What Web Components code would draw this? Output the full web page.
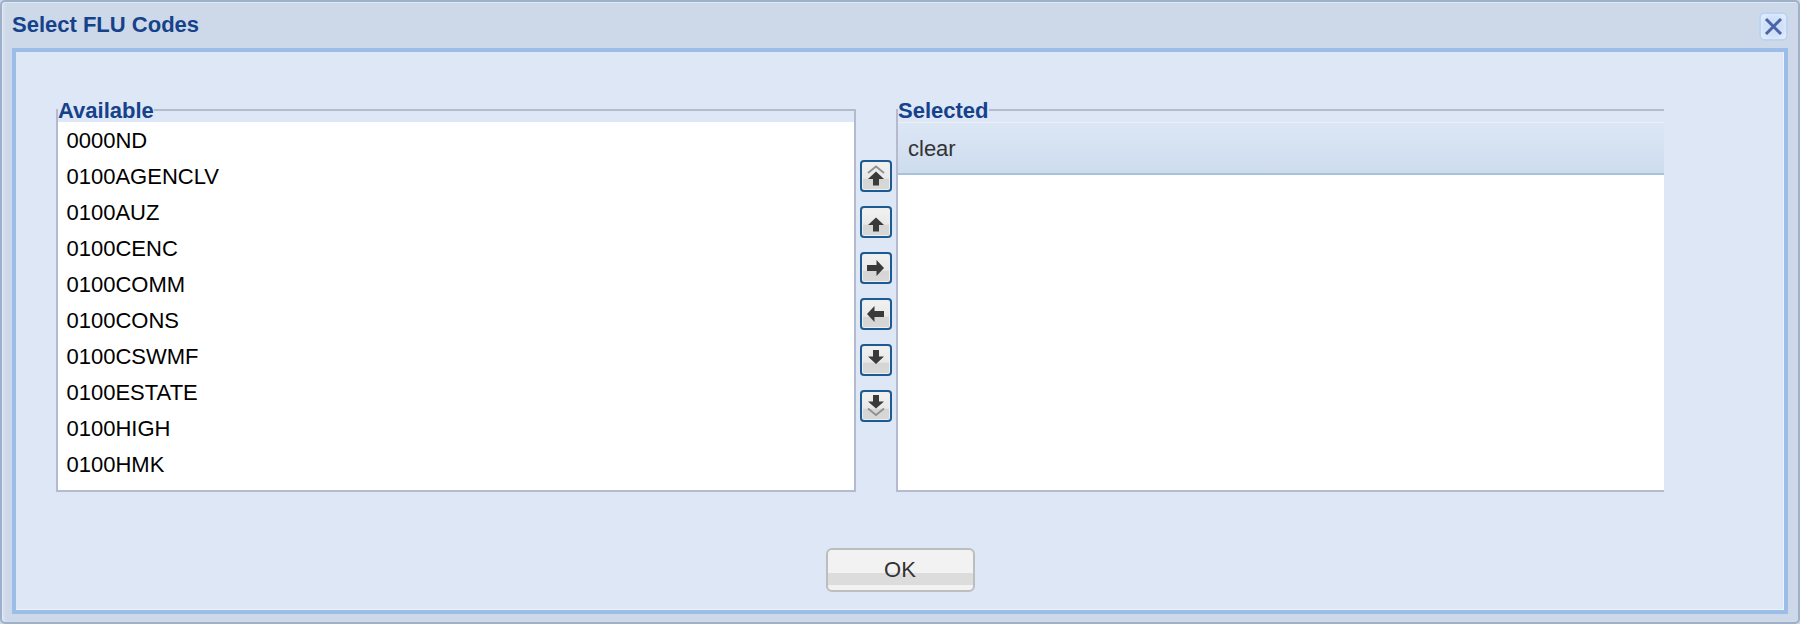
<!DOCTYPE html>
<html>
<head>
<meta charset="utf-8">
<title>Select FLU Codes</title>
<style>
  html, body { margin: 0; padding: 0; background: #cdd9e8; }
  body { font-family: "Liberation Sans", Arial, sans-serif; font-size: 22px; }
</style>
</head>
<body>

<flu-dialog heading="Select FLU Codes">
  <flu-picklist legend="Available" style="--list-width: 800px">
    <flu-item>0000ND</flu-item>
    <flu-item>0100AGENCLV</flu-item>
    <flu-item>0100AUZ</flu-item>
    <flu-item>0100CENC</flu-item>
    <flu-item>0100COMM</flu-item>
    <flu-item>0100CONS</flu-item>
    <flu-item>0100CSWMF</flu-item>
    <flu-item>0100ESTATE</flu-item>
    <flu-item>0100HIGH</flu-item>
    <flu-item>0100HMK</flu-item>
  </flu-picklist>
  <flu-move-bar>
    <flu-move-button icon="top"></flu-move-button>
    <flu-move-button icon="up"></flu-move-button>
    <flu-move-button icon="right"></flu-move-button>
    <flu-move-button icon="left"></flu-move-button>
    <flu-move-button icon="down"></flu-move-button>
    <flu-move-button icon="bottom"></flu-move-button>
  </flu-move-bar>
  <flu-picklist legend="Selected" open-right style="--list-width: 768px">
    <flu-clear-row slot="header">clear</flu-clear-row>
  </flu-picklist>
  <flu-ok-button slot="footer">OK</flu-ok-button>
</flu-dialog>

<script>
class FluDialog extends HTMLElement {
  constructor() {
    super();
    this.attachShadow({ mode: 'open' });
    this.shadowRoot.innerHTML = `
      <style>
        :host {
          display: flex;
          flex-direction: column;
          box-sizing: border-box;
          width: 1800px;
          height: 624px;
          background: #cdd9e8;
          border: 2px solid #9fb1ca;
          border-radius: 5px;
          box-shadow: inset 1px 1px 0 #dfe7f2, inset 4px 0 3px -2px #dfe7f2;
          color: #15428b;
        }
        .titlebar {
          display: flex;
          align-items: center;
          justify-content: space-between;
          height: 46px;
          flex: none;
          padding: 0 10px 0 10px;
          box-sizing: border-box;
        }
        .title {
          font: bold 22px/26px "Liberation Sans", Arial, sans-serif;
          color: #15428b;
        }
        .close {
          display: flex;
          align-items: center;
          justify-content: center;
          box-sizing: border-box;
          width: 29px;
          height: 29px;
          margin-top: 2px;
          border: 2px solid #bcd4f2;
          border-radius: 6px;
          background: radial-gradient(circle, #c9dbf6 0, #d3e2f8 55%, #e9f1fc 100%);
        }
        .panel {
          flex: 1;
          display: flex;
          flex-direction: column;
          margin: 0 10px 8px;
          padding: 44px 0 0 40px;
          background: #dee7f6;
          border: 4px solid #9bbde8;
          box-shadow: inset -1px -1px 0 #edf2fb;
          box-sizing: border-box;
        }
        .row { display: flex; align-items: flex-start; }
        .footer { display: flex; justify-content: center; margin-top: 56px; padding-right: 40px; }
      </style>
      <div class="titlebar">
        <span class="title"></span>
        <span class="close">
          <svg width="21" height="21" viewBox="0 0 21 21"><path d="M3 3 18 18M18 3 3 18" stroke="#4a64a8" stroke-width="3" fill="none"/></svg>
        </span>
      </div>
      <div class="panel">
        <div class="row"><slot></slot></div>
        <div class="footer"><slot name="footer"></slot></div>
      </div>
    `;
  }
  connectedCallback() {
    this.shadowRoot.querySelector('.title').textContent = this.getAttribute('heading');
  }
}
customElements.define('flu-dialog', FluDialog);

class FluPicklist extends HTMLElement {
  constructor() {
    super();
    this.attachShadow({ mode: 'open' });
    this.shadowRoot.innerHTML = `
      <style>
        :host { display: block; flex: none; width: var(--list-width); }
        fieldset {
          margin: 0;
          padding: 0;
          min-width: 0;
          border: 2px solid #b6bace;
          height: 396px;
          box-sizing: border-box;
        }
        :host([open-right]) fieldset { border-right: none; }
        legend {
          padding: 2px 0 0;
          font: bold 22px/25px "Liberation Sans", Arial, sans-serif;
          color: #15428b;
        }
        .body { background: #fff; height: 368px; margin-top: -1px; }
      </style>
      <fieldset>
        <legend></legend>
        <div class="body">
          <slot name="header"></slot>
          <slot></slot>
        </div>
      </fieldset>
    `;
  }
  connectedCallback() {
    this.shadowRoot.querySelector('legend').textContent = this.getAttribute('legend');
  }
}
customElements.define('flu-picklist', FluPicklist);

class FluItem extends HTMLElement {
  constructor() {
    super();
    this.attachShadow({ mode: 'open' });
    this.shadowRoot.innerHTML = `
      <style>
        :host {
          display: block;
          height: 36px;
          padding-left: 8.5px;
          font: 22px/37px "Liberation Sans", Arial, sans-serif;
          color: #000;
        }
      </style>
      <slot></slot>
    `;
  }
}
customElements.define('flu-item', FluItem);

class FluClearRow extends HTMLElement {
  constructor() {
    super();
    this.attachShadow({ mode: 'open' });
    this.shadowRoot.innerHTML = `
      <style>
        :host {
          display: block;
          box-sizing: border-box;
          height: 53px;
          padding: 0 0 0 10px;
          font: 22px/52px "Liberation Sans", Arial, sans-serif;
          color: #333;
          background: linear-gradient(#dce7f5, #cddcee);
          border-top: 1px solid #eaf0f9;
          border-bottom: 2px solid #a9c1dc;
        }
      </style>
      <slot></slot>
    `;
  }
}
customElements.define('flu-clear-row', FluClearRow);

class FluMoveBar extends HTMLElement {
  constructor() {
    super();
    this.attachShadow({ mode: 'open' });
    this.shadowRoot.innerHTML = `
      <style>
        :host {
          display: flex;
          flex-direction: column;
          gap: 14px;
          flex: none;
          margin: 64px 4px 0 4px;
        }
      </style>
      <slot></slot>
    `;
  }
}
customElements.define('flu-move-bar', FluMoveBar);

const ARROWS = {
  up: '<path d="M14 9.5 22 17H17V23.5H11V17H6Z" fill="#3a3a3a"/>',
  down: '<path d="M14 18 22 10.5H17V4H11V10.5H6Z" fill="#3a3a3a"/>',
  right: '<path d="M22 14 14.5 6V11H5V17H14.5V22Z" fill="#3a3a3a"/>',
  left: '<path d="M5 14 12.5 6V11H22V17H12.5V22Z" fill="#3a3a3a"/>',
  top: '<path d="M14 9.5 22 17H17V23.5H11V17H6Z" fill="#3a3a3a"/><path d="M6 11 14 4.5 22 11" fill="none" stroke="#909090" stroke-width="1.8"/>',
  bottom: '<path d="M14 16.5 22 9.5H17V3H11V9.5H6Z" fill="#3a3a3a"/><path d="M6 16.5 14 23 22 16.5" fill="none" stroke="#909090" stroke-width="1.8"/>'
};

class FluMoveButton extends HTMLElement {
  constructor() {
    super();
    this.attachShadow({ mode: 'open' });
    this.shadowRoot.innerHTML = `
      <style>
        :host {
          display: flex;
          align-items: center;
          justify-content: center;
          box-sizing: border-box;
          width: 32px;
          height: 32px;
          border: 2px solid #1c5a92;
          border-radius: 4px;
          background: linear-gradient(#f1f1f1 0, #e8e8e8 58%, #d5d5d5 62%, #d8d8d8 100%);
          box-shadow: inset 0 0 0 1px #eeeeee;
        }
      </style>
      <svg width="28" height="28" viewBox="0 0 28 28"></svg>
    `;
  }
  connectedCallback() {
    this.shadowRoot.querySelector('svg').innerHTML = ARROWS[this.getAttribute('icon')];
  }
}
customElements.define('flu-move-button', FluMoveButton);

class FluOkButton extends HTMLElement {
  constructor() {
    super();
    this.attachShadow({ mode: 'open' });
    this.shadowRoot.innerHTML = `
      <style>
        :host {
          display: block;
          box-sizing: border-box;
          width: 149px;
          height: 44px;
          text-align: center;
          font: 22px/40px "Liberation Sans", Arial, sans-serif;
          color: #333;
          border: 2px solid #bdbdbd;
          border-radius: 6px;
          background: linear-gradient(#f2f2f2 0, #f2f2f2 23px, #dcdcdc 23px, #dcdcdc 35px, #f2f2f2 35px);
        }
      </style>
      <slot></slot>
    `;
  }
}
customElements.define('flu-ok-button', FluOkButton);
</script>
</body>
</html>
